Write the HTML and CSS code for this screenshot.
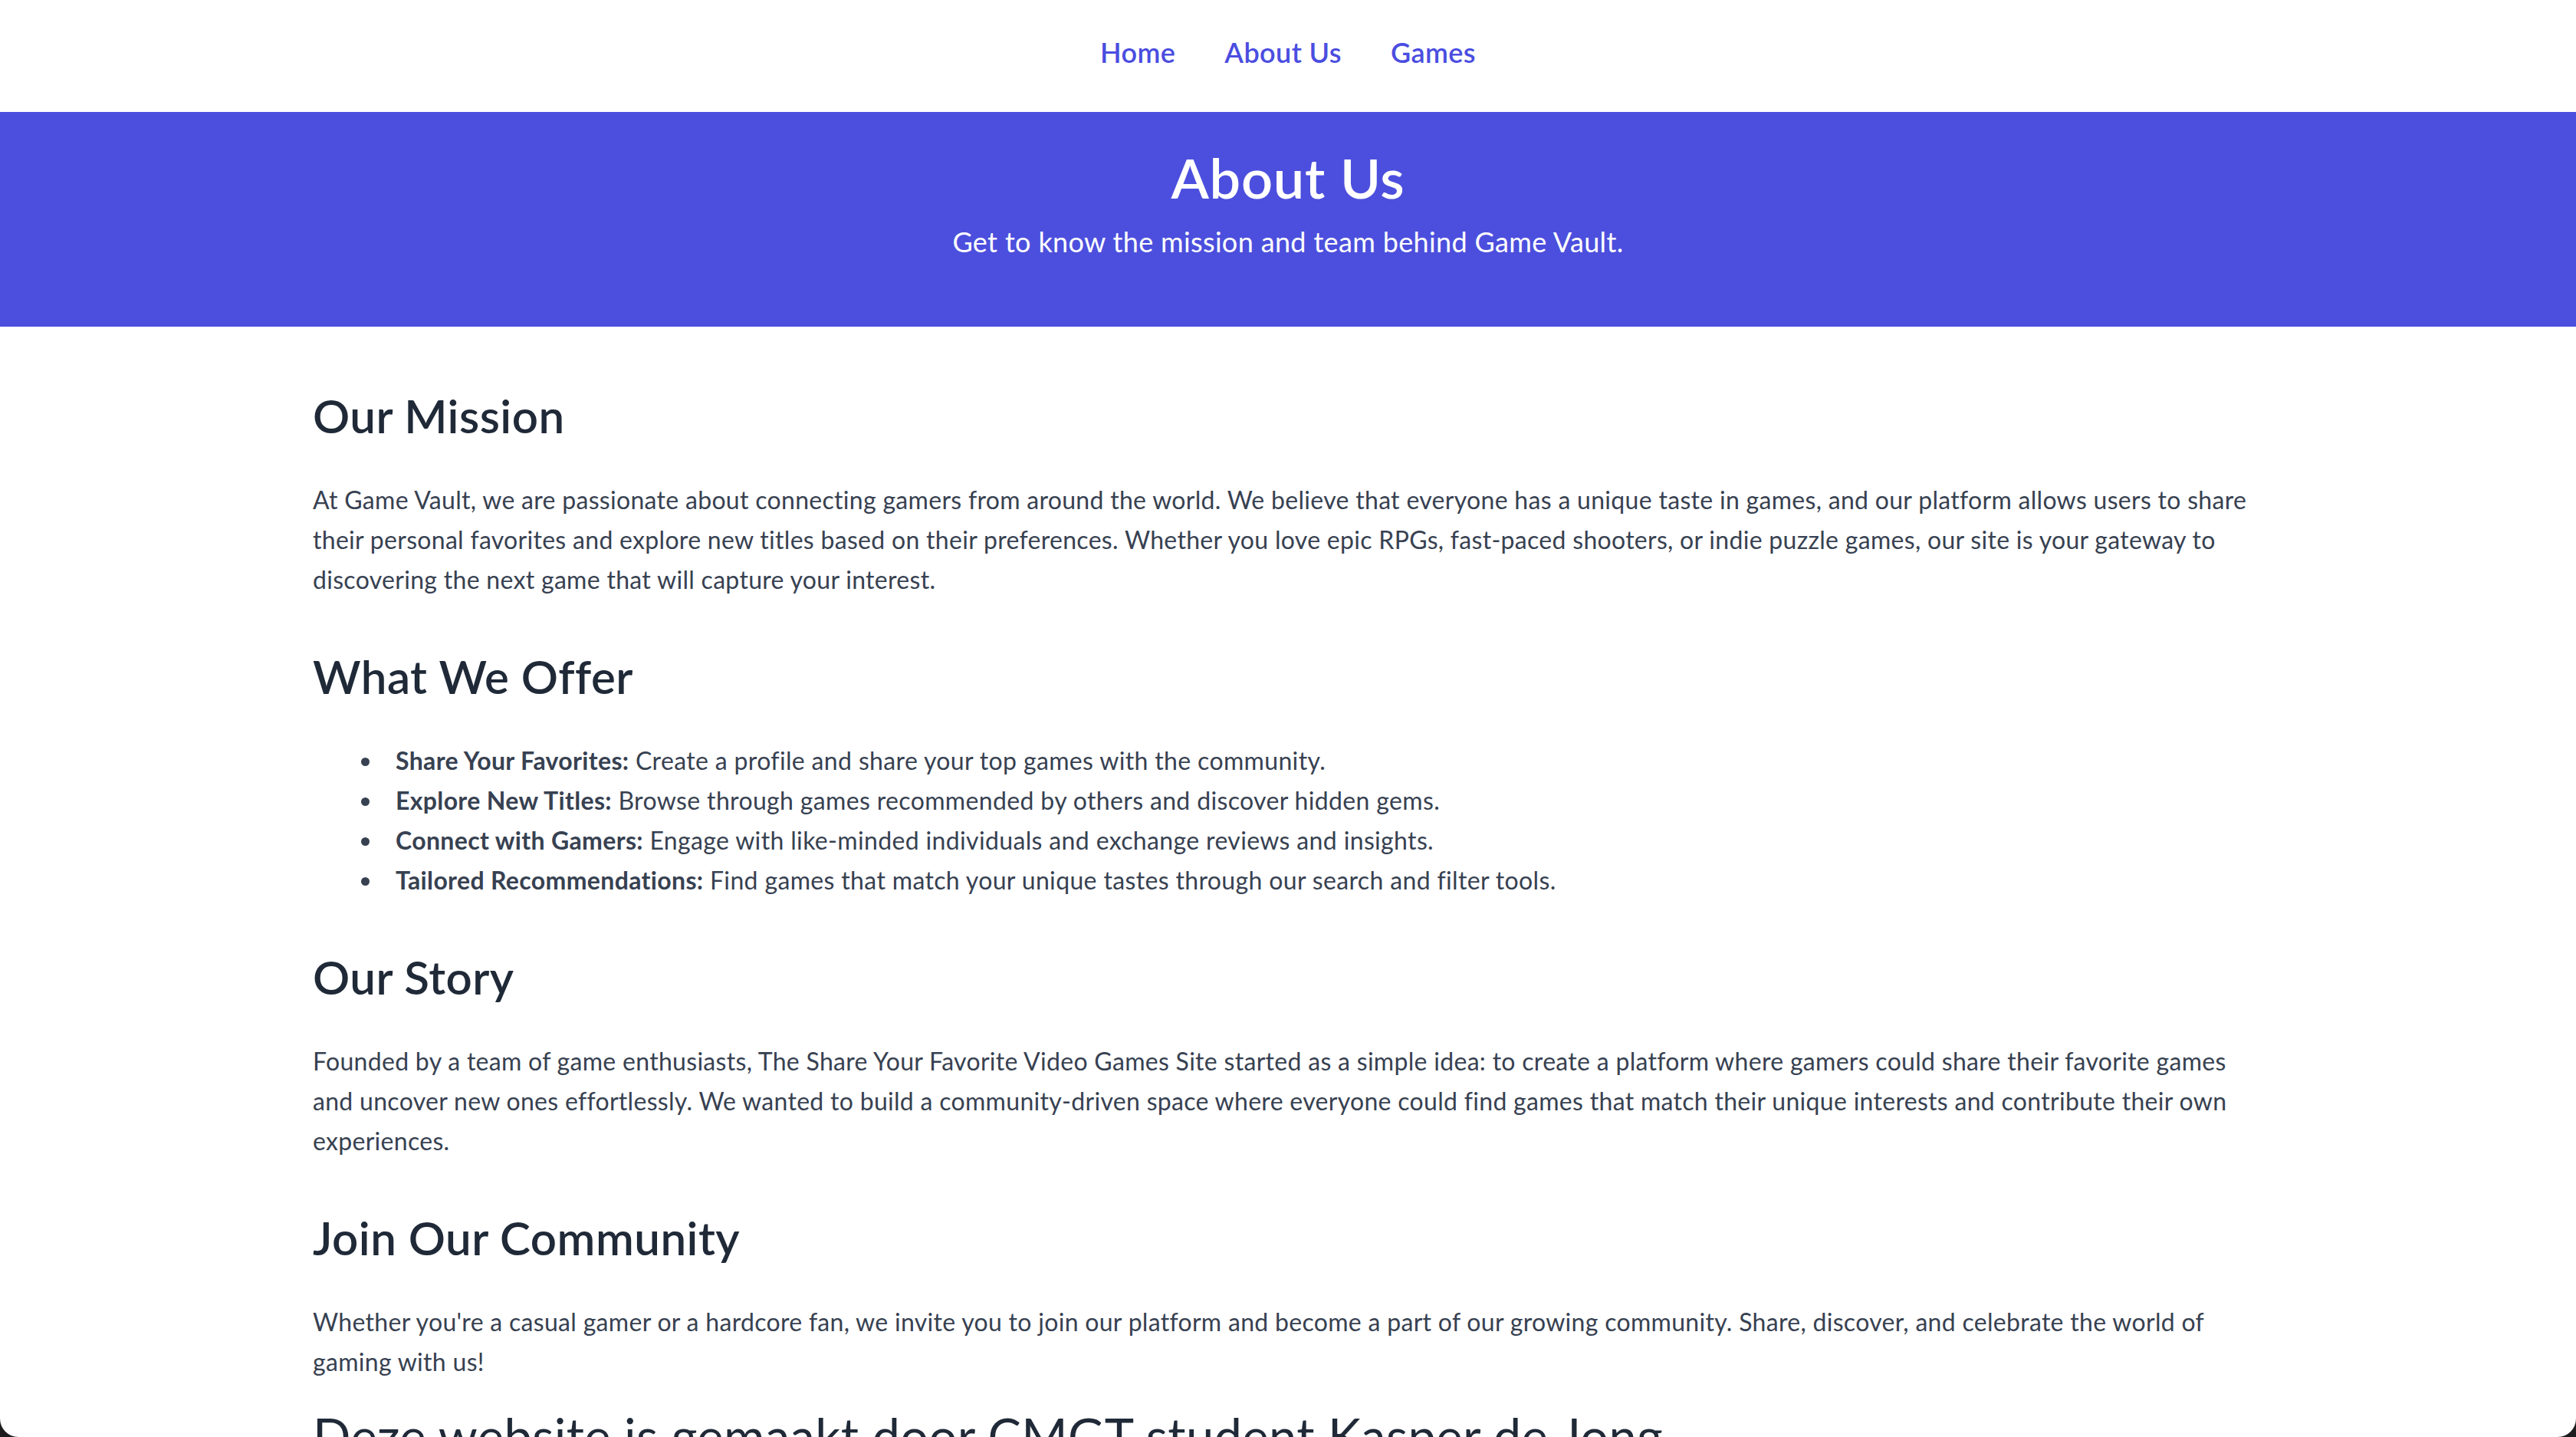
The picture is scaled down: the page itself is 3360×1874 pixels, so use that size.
FILE: index.html
```html
<!DOCTYPE html>
<html lang="en">
<head>
<meta charset="utf-8">
<title>About Us - Game Vault</title>
<link rel="stylesheet" href="styles.css">
</head>
<body>
<div class="window">
  <nav class="nav">
    <a class="nav-link" href="#">Home</a>
    <a class="nav-link" href="#">About Us</a>
    <a class="nav-link" href="#">Games</a>
  </nav>
  <header class="hero">
    <h1 class="hero-title">About Us</h1>
    <p class="hero-sub">Get to know the mission and team behind Game Vault.</p>
  </header>
  <main class="content">
    <section class="section">
      <h2 class="section-title">Our Mission</h2>
      <p class="text">At Game Vault, we are passionate about connecting gamers from around the world. We believe that everyone has a unique taste in games, and our platform allows users to share their personal favorites and explore new titles based on their preferences. Whether you love epic RPGs, fast-paced shooters, or indie puzzle games, our site is your gateway to discovering the next game that will capture your interest.</p>
    </section>
    <section class="section">
      <h2 class="section-title">What We Offer</h2>
      <ul class="offer-list">
        <li><strong>Share Your Favorites:</strong> Create a profile and share your top games with the community.</li>
        <li><strong>Explore New Titles:</strong> Browse through games recommended by others and discover hidden gems.</li>
        <li><strong>Connect with Gamers:</strong> Engage with like-minded individuals and exchange reviews and insights.</li>
        <li><strong>Tailored Recommendations:</strong> Find games that match your unique tastes through our search and filter tools.</li>
      </ul>
    </section>
    <section class="section">
      <h2 class="section-title">Our Story</h2>
      <p class="text">Founded by a team of game enthusiasts, The Share Your Favorite Video Games Site started as a simple idea: to create a platform where gamers could share their favorite games and uncover new ones effortlessly. We wanted to build a community-driven space where everyone could find games that match their unique interests and contribute their own experiences.</p>
    </section>
    <section class="section last">
      <h2 class="section-title">Join Our Community</h2>
      <p class="text">Whether you're a casual gamer or a hardcore fan, we invite you to join our platform and become a part of our growing community. Share, discover, and celebrate the world of gaming with us!</p>
    </section>
    <footer class="credit">
      <h2 class="credit-title">Deze website is gemaakt door CMGT student Kasper de Jong</h2>
    </footer>
  </main>
</div>
</body>
</html>
```
FILE: styles.css
```css
html {
  background: #1c1c1e;
  height: 100%;
}
body {
  margin: 0;
  height: 100vh;
  overflow: hidden;
  font-family: "Lato", "Noto Sans", sans-serif;
}
.window {
  height: 100%;
  overflow: hidden;
  background: #ffffff;
  border-radius: 0 0 24px 24px;
}
.nav {
  box-sizing: border-box;
  height: 146px;
  padding-top: 47px;
  display: flex;
  justify-content: center;
  gap: 64px;
}
.nav-link {
  color: #4a4de0;
  text-decoration: none;
  font-size: 36px;
  line-height: 1.2;
  font-weight: 600;
  letter-spacing: 0.4px;
}
.hero {
  background: #4c4fdd;
  color: #ffffff;
  text-align: center;
  box-sizing: border-box;
  height: 280px;
  padding-top: 45px;
}
.hero-title {
  margin: 0;
  font-size: 72px;
  line-height: 80px;
  font-weight: 600;
  letter-spacing: 0.8px;
}
.hero-sub {
  margin: 16px 0 0;
  font-size: 36px;
  line-height: 56px;
  letter-spacing: 0.35px;
}
.content {
  max-width: 2544px;
  margin: 0 auto;
  padding-top: 80px;
  color: #374151;
}
.section {
  margin-bottom: 64px;
}
.section.last {
  margin-bottom: 31px;
}
.section-title {
  margin: 0 0 48px;
  font-size: 60px;
  line-height: 72px;
  font-weight: 600;
  letter-spacing: 0.5px;
  color: #1f2937;
}
.text {
  margin: 0;
  font-size: 32px;
  line-height: 52px;
  letter-spacing: 0.3px;
}
.offer-list {
  margin: 0;
  padding-left: 91px;
  font-size: 32px;
  line-height: 52px;
  letter-spacing: 0.35px;
}
.offer-list li {
  padding-left: 17px;
}
.offer-list strong {
  font-weight: 700;
  color: #374151;
}
.credit-title {
  margin: 0;
  font-size: 65px;
  line-height: 1.2;
  font-weight: 400;
  letter-spacing: 0.4px;
  color: #1f2937;
}
```
